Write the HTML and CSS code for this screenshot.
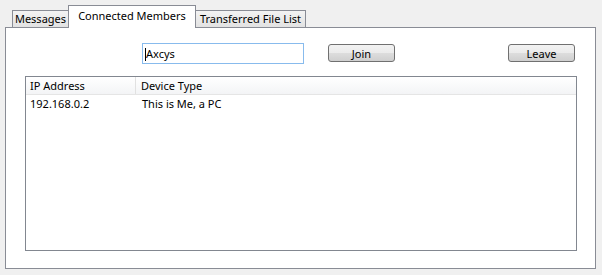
FILE: index.html
```html
<!DOCTYPE html>
<html lang="en">
<head>
    <meta charset="UTF-8">
    <title>Connected Members</title>
    <link rel="stylesheet" href="styles.css">
</head>
<body>

    <div class="window">
        <div class="tabs">
            <div class="tab tab-messages">Messages</div>
            <div class="tab tab-members selected">Connected Members</div>
            <div class="tab tab-files">Transferred File List</div>
        </div>
        <div class="panel">
            <div class="toolbar">
                <div class="name-box"><span class="caret"></span>Axcys</div>
                <button class="join">Join</button>
                <button class="leave">Leave</button>
            </div>
            <div class="list">
                <div class="list-head">
                    <div class="col ip">IP Address</div>
                    <div class="col device">Device Type</div>
                </div>
                <div class="list-row">
                    <div class="col ip">192.168.0.2</div>
                    <div class="col device">This is Me, a PC</div>
                </div>
            </div>
        </div>
    </div>

</body>
</html>
```

FILE: styles.css
```css
body {
    margin: 0;
    background-color: #f0f0f0;
    font-family: "Noto Sans", "Open Sans", sans-serif;
    font-size: 11px;
    color: #000;
}
.window {
    width: 602px;
    height: 275px;
    padding: 5px 6px 0 5px;
    box-sizing: border-box;
}
.tabs {
    display: flex;
    align-items: flex-end;
    height: 22px;
    padding-left: 7px;
}
.tab {
    height: 17px;
    line-height: 16px;
    border: 1px solid #898c95;
    border-bottom: none;
    background: linear-gradient(#f3f3f3, #e2e2e2);
    white-space: nowrap;
    text-align: center;
    box-sizing: border-box;
}
.tab + .tab {
    margin-left: -1px;
}
.tab-messages {
    width: 57px;
}
.tab-members {
    width: 128px;
}
.tab-files {
    width: 111px;
}
.tab.selected {
    position: relative;
    z-index: 1;
    height: 23px;
    line-height: 20px;
    margin-bottom: -1px;
    background: #fff;
}
.panel {
    height: 242px;
    box-sizing: border-box;
    border: 1px solid #898c95;
    background: #fff;
    padding: 15px 18px 17px 19px;
}
.toolbar {
    display: flex;
    align-items: flex-start;
    height: 33px;
}
.name-box {
    margin-left: 117px;
    width: 158px;
    height: 19px;
    line-height: 19px;
    border: 1px solid #88bbed;
    padding-left: 2px;
}
.caret {
    display: inline-block;
    width: 1px;
    height: 13px;
    background: #000;
    vertical-align: -3px;
}
.toolbar button {
    margin-top: 1px;
    width: 67px;
    height: 18px;
    padding: 0;
    font-family: inherit;
    font-size: 11px;
    line-height: 15px;
    color: #000;
    border: 1px solid #707070;
    border-radius: 3px;
    background: linear-gradient(#f2f2f2 0%, #ebebeb 50%, #dddddd 51%, #cfcfcf 100%);
}
.join {
    margin-left: 24px;
}
.leave {
    margin-left: auto;
    margin-right: 2px;
}
.list {
    height: 175px;
    box-sizing: border-box;
    border: 1px solid #828790;
}
.list-head {
    display: flex;
    height: 17px;
    line-height: 17px;
    background: linear-gradient(#ffffff, #f3f4f6);
    border-bottom: 1px solid #e5e5e5;
}
.list-head .ip {
    border-right: 1px solid #e1e1e1;
}
.col.ip {
    width: 105px;
    padding-left: 4px;
}
.col.device {
    padding-left: 5px;
}
.list-row {
    display: flex;
    height: 17px;
    line-height: 17px;
}
.list-row .device {
    padding-left: 7px;
}
```
